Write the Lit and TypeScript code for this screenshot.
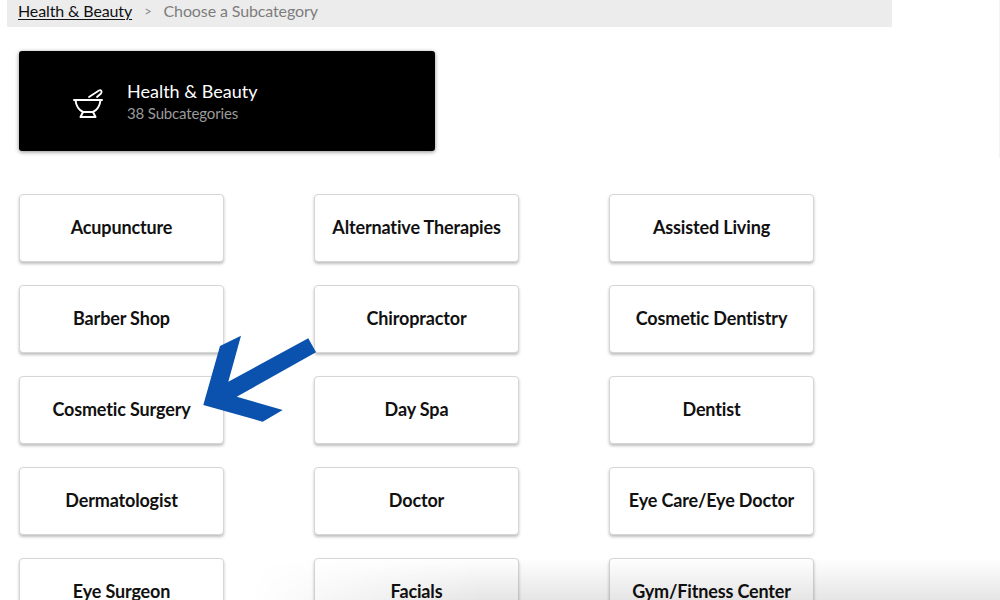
import { LitElement, html, css, svg } from "lit";
import { customElement } from "lit/decorators.js";

const TILES = [
  "Acupuncture", "Alternative Therapies", "Assisted Living",
  "Barber Shop", "Chiropractor", "Cosmetic Dentistry",
  "Cosmetic Surgery", "Day Spa", "Dentist",
  "Dermatologist", "Doctor", "Eye Care/Eye Doctor",
  "Eye Surgeon", "Facials", "Gym/Fitness Center",
];

@customElement("app-root")
export class AppRoot extends LitElement {
  static styles = css`
    :host {
      display: block;
      position: relative;
      width: 1000px;
      height: 600px;
      overflow: hidden;
      background: #fff;
      font-family: Lato, "Open Sans", sans-serif;
      color: #000;
    }
    .crumbs {
      box-sizing: border-box;
      width: 885px;
      height: 27px;
      margin-left: 7px;
      padding-left: 11px;
      padding-bottom: 6px;
      background: #ececec;
      display: flex;
      align-items: center;
      font-size: 16px;
      line-height: 24px;
      letter-spacing: -0.12px;
    }
    .crumbs a {
      color: #111;
      text-decoration: underline;
      text-underline-offset: 2px;
      text-decoration-thickness: 1px;
    }
    .sep {
      color: #888;
      font-size: 13px;
      margin: 0 12px;
    }
    .current {
      color: #7d7d7d;
    }
    .content {
      padding: 24px 0 0 19px;
    }
    .hero {
      box-sizing: border-box;
      width: 416px;
      height: 100px;
      background: #000;
      border-radius: 3px;
      box-shadow: 0 1px 4px rgba(0, 0, 0, 0.45);
      display: flex;
      align-items: center;
      padding-left: 53px;
      gap: 23px;
      color: #fff;
    }
    .hero svg {
      width: 32px;
      height: 32px;
      flex: none;
      margin-top: 4px;
    }
    .hero-text {
      display: flex;
      flex-direction: column;
      margin-top: -1px;
    }
    .hero-title {
      font-size: 18px;
      line-height: 24px;
    }
    .hero-sub {
      font-size: 15px;
      line-height: 20px;
      letter-spacing: -0.15px;
      color: #9a9a9a;
    }
    .grid {
      display: grid;
      grid-template-columns: repeat(3, 205px);
      column-gap: 90px;
      row-gap: 23px;
      margin-top: 43px;
    }
    .tile {
      box-sizing: border-box;
      height: 68px;
      background: #fff;
      border: 1px solid #d6d6d6;
      border-radius: 4px;
      box-shadow: 0 2px 3px rgba(0, 0, 0, 0.25);
      display: flex;
      align-items: center;
      justify-content: center;
      padding-bottom: 2px;
      font-size: 18px;
      font-weight: 700;
      letter-spacing: -0.15px;
      color: #111;
    }
    .arrow {
      position: absolute;
      left: 0;
      top: 0;
      width: 1000px;
      height: 600px;
      pointer-events: none;
    }
    .edge {
      position: absolute;
      right: 0;
      top: 0;
      width: 1px;
      height: 158px;
      background: #f3f3f3;
    }
    .fade {
      position: absolute;
      left: 0;
      right: 0;
      bottom: 0;
      height: 42px;
      pointer-events: none;
      background: linear-gradient(to top, rgba(0, 0, 0, 0.1), rgba(0, 0, 0, 0));
      -webkit-mask-image: linear-gradient(to right, transparent 250px, #000 480px);
      mask-image: linear-gradient(to right, transparent 250px, #000 480px);
    }
  `;

  render() {
    return html`
      <div class="crumbs">
        <a>Health &amp; Beauty</a>
        <span class="sep">&gt;</span>
        <span class="current">Choose a Subcategory</span>
      </div>
      <div class="content">
        <div class="hero">
          <svg viewBox="0 0 32 32" fill="none" stroke="#fff" stroke-width="2" stroke-linejoin="round" stroke-linecap="round">
            ${svg`<path d="M2 13H30M3.500 13C4 18.500 7 23 11 25H21C25 23 28 18.500 28.500 13M11 25L8.500 30H23.500L21 25" />
            <path d="M17 10L27 3.500C29 2.500 30.500 4.500 29 6.500L25 10" stroke-width="1.800" />`}
          </svg>
          <div class="hero-text">
            <span class="hero-title">Health &amp; Beauty</span>
            <span class="hero-sub">38 Subcategories</span>
          </div>
        </div>
        <div class="grid">
          ${TILES.map((t) => html`<div class="tile">${t}</div>`)}
        </div>
      </div>
      <div class="fade"></div>
      <div class="edge"></div>
      <svg class="arrow" viewBox="0 0 1000 600">
        <polygon fill="#0a52ad" points="308.300,338.300 316,352.300 236.700,396.700 282.700,410 262.700,421.700 203.300,405 220,346 241,335.700 228.300,381.700" />
      </svg>
    `;
  }
}
